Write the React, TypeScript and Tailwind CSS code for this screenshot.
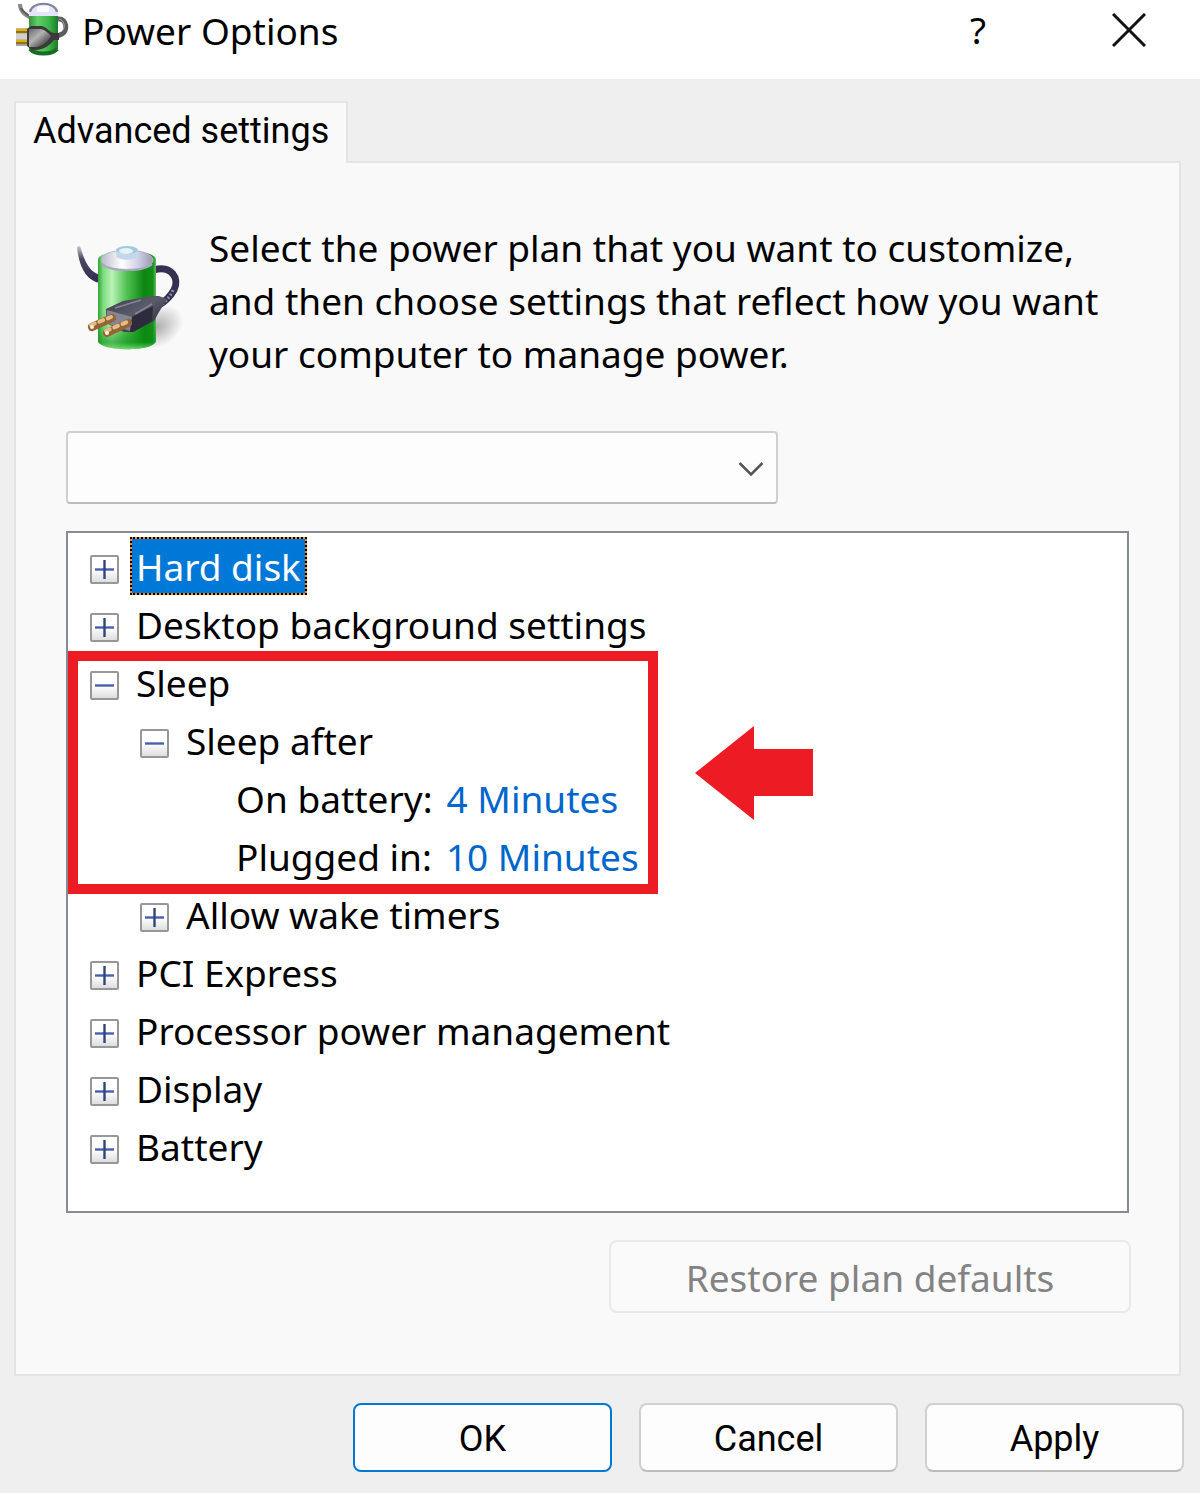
import { useState, type ReactNode } from "react";

function PowerIcon() {
  return (
    <svg viewBox="0 0 110 110" className="h-[110px] w-[110px] shrink-0" aria-hidden="true">
      <defs>
        <linearGradient id="cell" x1="0" x2="1">
          <stop offset="0" stopColor="#2fa534" />
          <stop offset="0.09" stopColor="#7ddb80" />
          <stop offset="0.24" stopColor="#b9f2b4" />
          <stop offset="0.5" stopColor="#4fc152" />
          <stop offset="0.8" stopColor="#0c8710" />
          <stop offset="0.94" stopColor="#128f18" />
          <stop offset="1" stopColor="#5fba60" />
        </linearGradient>
        <linearGradient id="cellBase" x1="0" x2="0" y1="0" y2="1">
          <stop offset="0.7" stopColor="#0a8a10" stopOpacity="0" />
          <stop offset="0.92" stopColor="#079015" stopOpacity="0.6" />
          <stop offset="1" stopColor="#78e078" stopOpacity="0.9" />
        </linearGradient>
        <linearGradient id="cap" x1="0" x2="1">
          <stop offset="0" stopColor="#b9b9cc" />
          <stop offset="0.4" stopColor="#ffffff" />
          <stop offset="0.7" stopColor="#d4d2ea" />
          <stop offset="1" stopColor="#9a98b0" />
        </linearGradient>
        <linearGradient id="plug" x1="0" x2="1" y1="0" y2="1">
          <stop offset="0" stopColor="#3a3b4a" />
          <stop offset="0.45" stopColor="#5b5c6b" />
          <stop offset="1" stopColor="#20202e" />
        </linearGradient>
        <linearGradient id="cordFade" x1="0" x2="0" y1="0" y2="1">
          <stop offset="0" stopColor="#c9c9cf" />
          <stop offset="0.35" stopColor="#4a4864" />
          <stop offset="1" stopColor="#2f2d4c" />
        </linearGradient>
        <radialGradient id="shade">
          <stop offset="0" stopColor="#8d8d8d" stopOpacity="0.7" />
          <stop offset="1" stopColor="#8d8d8d" stopOpacity="0" />
        </radialGradient>
      </defs>
      <ellipse cx="82" cy="84" rx="28" ry="20" fill="url(#shade)" transform="rotate(-30 82 84)" />
      <path d="M2 4C4 25 12 38 25 40V32C15 29 10 20 5 3Z" fill="url(#cordFade)" />
      <path d="M79 27C96 22 105 35 99 47C95 54 91 58 84 62" fill="none" stroke="#343250" strokeWidth="7" />
      <path d="M98 47C95 54 91 58 86 62" fill="none" stroke="#8b8ba0" strokeWidth="3" strokeDasharray="2 2" />
      <path d="M23 16V98C25 109 79 109 81 98V16C77 5 27 5 23 16Z" fill="url(#cell)" />
      <path d="M23 16V98C25 109 79 109 81 98V16Z" fill="url(#cellBase)" />
      <ellipse cx="52" cy="17" rx="26" ry="10" fill="url(#cap)" stroke="#b7b8c6" strokeWidth="1" />
      <path d="M27 21C35 29 69 29 77 21" fill="none" stroke="#aaa7c2" strokeWidth="2" />
      <path d="M41 7V13C44 18 60 18 63 13V7Z" fill="#c4d8ea" />
      <ellipse cx="52" cy="7" rx="11" ry="4" fill="#a5c9dc" />
      <ellipse cx="51" cy="8" rx="7" ry="3" fill="#e4f3fa" />
      <path d="M31 66L48 58L76 53H84L92 56L84 69L79 78L58 89H49L31 80Z" fill="url(#plug)" />
      <path d="M32 67L57 74L55 88L31 80Z" fill="#858694" />
      <path d="M57 74L78 63L77 78L58 89H55Z" fill="#2c2c3c" />
      <path d="M40 65L66 57M60 71L77 61" stroke="#858694" strokeWidth="1.5" />
      <path d="M17 84L37 75" stroke="#946437" strokeWidth="8" strokeLinecap="round" />
      <path d="M16 82L36 74" stroke="#e6bb84" strokeWidth="4" strokeLinecap="round" strokeDasharray="4 5" />
      <path d="M32 90L53 80" stroke="#946437" strokeWidth="8" strokeLinecap="round" />
      <path d="M31 88L52 79" stroke="#e6bb84" strokeWidth="4" strokeLinecap="round" strokeDasharray="4 5" />
      <circle cx="17" cy="84" r="2" fill="#fff3dc" />
      <circle cx="32" cy="90" r="2" fill="#fff3dc" />
    </svg>
  );
}

function TitleIcon() {
  return (
    <svg viewBox="0 0 54 56" className="h-[56px] w-[54px] shrink-0" aria-hidden="true">
      <defs>
        <linearGradient id="smallCell" x1="0" x2="1">
          <stop offset="0" stopColor="#3a8f3f" />
          <stop offset="0.3" stopColor="#5fd067" />
          <stop offset="0.7" stopColor="#3bb345" />
          <stop offset="1" stopColor="#1f7a29" />
        </linearGradient>
        <linearGradient id="smallPlug" x1="0" x2="1" y1="0" y2="1">
          <stop offset="0" stopColor="#6a6a6a" />
          <stop offset="0.4" stopColor="#b4b4b4" />
          <stop offset="0.8" stopColor="#4a4a4a" />
          <stop offset="1" stopColor="#2e2e2e" />
        </linearGradient>
      </defs>
      <path d="M5 4C5 11 9 14 16 18" fill="none" stroke="#8a8a8a" strokeWidth="4" />
      <path d="M6 8C8 12 11 14 16 17" fill="none" stroke="#5e5e5e" strokeWidth="2" />
      <path d="M14 11C16 1 41 1 43 11V49C40 57 17 57 14 49Z" fill="url(#smallCell)" />
      <path d="M14 16V11C16 1 41 1 43 11V16Z" fill="#e4e4fa" />
      <path d="M15 12C17 1 40 1 42 12" fill="none" stroke="#83839b" strokeWidth="2" />
      <path d="M22 6H34V12H22Z" fill="#fafaff" />
      <path d="M15 49C20 55 37 55 42 49" fill="none" stroke="#196d22" strokeWidth="4" />
      <path d="M43 19C52 18 53 31 47 34L38 38" fill="none" stroke="#5c5c5c" strokeWidth="5" />
      <path d="M44 19C50 20 51 29 46 32" fill="none" stroke="#a7a7a7" strokeWidth="1" />
      <path d="M1 31H14M1 42H14" stroke="#8c721b" strokeWidth="5" />
      <path d="M1 30H12M1 41H12" stroke="#e1ae16" strokeWidth="2" />
      <path d="M1 34H12V39H1Z" fill="#cfcfcf" />
      <path d="M1 45H12" stroke="#a3a3a3" strokeWidth="2" />
      <path d="M12 29L16 26H27C33 28 34 32 39 33H44V40H39C35 45 30 49 22 50H17L12 46Z" fill="#3a3a3a" />
      <path d="M14 29H26C30 30 33 33 36 36C33 41 28 46 21 47H14Z" fill="url(#smallPlug)" />
    </svg>
  );
}

function Expander({ open, label, onClick }: { open: boolean; label: string; onClick: () => void }) {
  return (
    <button
      type="button"
      aria-label={label}
      aria-expanded={open}
      onClick={onClick}
      className="mt-[6px] flex size-[29px] shrink-0 items-center justify-center rounded-xs border-2 border-[#979797] bg-linear-to-b from-white from-50% to-[#dedede]"
    >
      <svg viewBox="0 0 19 19" className="size-[19px] shrink-0" aria-hidden="true">
        <path d="M0 9.5H19" stroke="#4660b0" strokeWidth="2.4" />
        {!open && <path d="M9.5 0V19" stroke="#2f4478" strokeWidth="2.4" />}
      </svg>
    </button>
  );
}

function Branch({
  label,
  initiallyOpen = false,
  selected = false,
  children,
}: {
  label: string;
  initiallyOpen?: boolean;
  selected?: boolean;
  children?: ReactNode;
}) {
  const [open, setOpen] = useState(initiallyOpen);
  return (
    <li>
      <div className="flex h-[58px] items-center gap-[11px]">
        <Expander open={open} label={label} onClick={() => setOpen(!open)} />
        {selected ? (
          <span className="flex h-[58px] border-2 border-dotted border-black bg-[#ff8728]">
            <span className="flex items-center bg-[#0078d7] px-1 text-white">{label}</span>
          </span>
        ) : (
          <span className="px-[6px]">{label}</span>
        )}
      </div>
      {open && children && <ul className="pl-[50px]">{children}</ul>}
    </li>
  );
}

function Setting({ name, value }: { name: string; value: string }) {
  return (
    <li className="flex h-[58px] items-center gap-[14px] pl-[46px]">
      <span>{name}</span>
      <a href="#value" className="text-[#0066cc]">
        {value}
      </a>
    </li>
  );
}

export default function App() {
  return (
    <div className="flex min-h-screen flex-col bg-[#efefef] font-['Noto_Sans',sans-serif] text-[37px] leading-[53px] whitespace-nowrap text-black">
      <header className="flex h-[79px] items-start bg-white pr-[54px] pl-[15px]">
        <TitleIcon />
        <h1 className="ml-[13px] flex-1 pt-1">Power Options</h1>
        <button type="button" aria-label="Help" className="mr-[126px] pt-[3px]">
          ?
        </button>
        <button type="button" aria-label="Close" className="pt-[13px]">
          <svg viewBox="0 0 34 34" className="size-[34px]" aria-hidden="true">
            <path d="M1 1L33 33M33 1L1 33" stroke="#111111" strokeWidth="3" />
          </svg>
        </button>
      </header>

      <main className="flex flex-1 flex-col pt-[22px] pr-[19px] pl-[14px]">
        <div role="tablist" className="z-10 -mb-[2px] flex">
          <button
            type="button"
            role="tab"
            aria-selected="true"
            className="h-[62px] border-2 border-b-0 border-[#e4e4e4] bg-[#f9f9f9] px-[17px] pb-1 font-['Roboto',sans-serif] text-[36px]"
          >
            Advanced settings
          </button>
        </div>
        <section className="flex flex-1 flex-col border-2 border-[#e4e4e4] bg-[#f9f9f9] px-[50px] pt-[58px] pb-[61px]">
          <div className="flex pl-[9px]">
            <div className="pt-[22px]">
              <PowerIcon />
            </div>
            <p className="ml-6">
              Select the power plan that you want to customize,
              <br />
              and then choose settings that reflect how you want
              <br />
              your computer to manage power.
            </p>
          </div>

          <div className="relative mt-[51px] w-[67%]">
            <select
              aria-label="Power plan"
              className="block h-[73px] w-full appearance-none rounded border-2 border-[#d0d0d0] border-b-[#bcbcbc] bg-[#fdfdfd] px-4"
            >
              <option value=""></option>
            </select>
            <svg viewBox="0 0 26 16" className="pointer-events-none absolute top-[30px] right-[14px] h-[16px] w-[26px]" aria-hidden="true">
              <path d="M1.500 2L13 13.500L24.500 2" fill="none" stroke="#555555" strokeWidth="2.500" />
            </svg>
          </div>

          <ul className="mt-[27px] flex-1 border-2 border-[#868b95] bg-white pt-1 pb-8 pl-[22px]">
            <Branch label="Hard disk" selected />
            <Branch label="Desktop background settings" />
            <li className="relative">
              <ul>
                <Branch label="Sleep" initiallyOpen>
                  <Branch label="Sleep after" initiallyOpen>
                    <Setting name="On battery:" value="4 Minutes" />
                    <Setting name="Plugged in:" value="10 Minutes" />
                  </Branch>
                  <Branch label="Allow wake timers" />
                </Branch>
              </ul>
              <div className="pointer-events-none absolute -top-[2px] -left-[22px] flex items-center gap-[37px]">
                <div className="h-[243px] w-[590px] border-10 border-[#ed1c24]" />
                <svg viewBox="0 0 118 94" className="h-[94px] w-[118px]" aria-hidden="true">
                  <path d="M0 47L59 0V23H118V70H59V94Z" fill="#ed1c24" />
                </svg>
              </div>
            </li>
            <Branch label="PCI Express" />
            <Branch label="Processor power management" />
            <Branch label="Display" />
            <Branch label="Battery" />
          </ul>

          <button
            type="button"
            disabled
            className="-mr-[2px] mt-[27px] h-[73px] w-[522px] self-end rounded-lg border-2 border-[#e9e9e9] bg-[#fafafa] pt-[2px] text-[#838383]"
          >
            Restore plan defaults
          </button>
        </section>
      </main>

      <footer className="flex justify-end gap-[27px] px-4 pt-[27px] pb-[21px] font-['Roboto',sans-serif] text-[36px]">
        <button type="button" className="h-[69px] w-[259px] rounded-lg border-2 border-[#0078d4] bg-[#fdfdfd] pt-[3px]">
          OK
        </button>
        <button type="button" className="h-[69px] w-[259px] rounded-lg border-2 border-[#d0d0d0] border-b-[#bcbcbc] bg-[#fdfdfd] pt-[3px]">
          Cancel
        </button>
        <button type="button" className="h-[69px] w-[259px] rounded-lg border-2 border-[#d0d0d0] border-b-[#bcbcbc] bg-[#fdfdfd] pt-[3px]">
          Apply
        </button>
      </footer>
    </div>
  );
}
